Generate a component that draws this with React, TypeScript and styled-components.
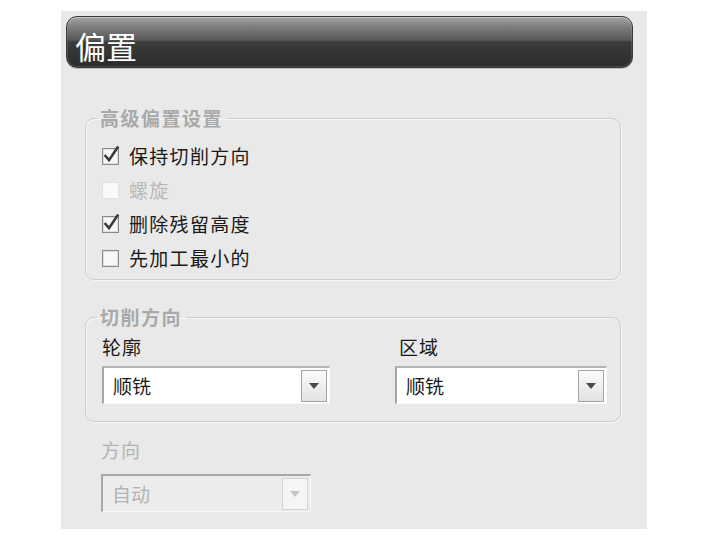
import { createGlobalStyle, styled } from "styled-components";

const GlobalStyle = createGlobalStyle`
  html, body {
    margin: 0;
    padding: 0;
    background: #ffffff;
  }
  * {
    box-sizing: border-box;
  }
`;

const font = `"Noto Sans CJK SC", "Noto Sans", sans-serif`;

const Panel = styled.div`
  margin: 11px 0 0 61px;
  width: 586px;
  height: 518px;
  background: #e9e9e9;
  padding: 5px 14px 0 5px;
  font-family: ${font};
`;

const TitleBar = styled.div`
  height: 52px;
  border-radius: 11px;
  border: 1px solid #3a3a3a;
  padding: 7px 0 0 8px;
  background: linear-gradient(
    to bottom,
    #a4a4a4 0%,
    #7a7a7a 22%,
    #585858 46%,
    #3c3c3c 50%,
    #323232 78%,
    #2c2c2c 100%
  );
  box-shadow: inset 0 1px 0 rgba(255, 255, 255, 0.35),
    inset 0 0 0 1px rgba(255, 255, 255, 0.12), 0 1px 0 #bdbdbd;
  color: #ffffff;
  font-size: 31px;
  line-height: 44px;
`;

const Content = styled.div`
  margin: 0 12px 0 19px;
  display: flex;
  flex-direction: column;
`;

const Group = styled.fieldset<{ $top: number }>`
  margin: ${({ $top }) => $top}px 0 0 0;
  padding: 0;
  border: 1px solid #cdcdcd;
  border-radius: 9px;
  box-shadow: inset 1px 1px 0 #f6f6f6, 1px 1px 0 #f6f6f6;
  min-width: 0;
`;

const GroupTitle = styled.legend`
  margin-left: 11px;
  padding: 0 4px 0 3px;
  font-size: 19px;
  line-height: 22px;
  font-weight: 700;
  letter-spacing: 1.5px;
  color: #a9a9a9;
`;

const OptionList = styled.div`
  padding: 9px 16px 5px 16px;
  display: flex;
  flex-direction: column;
`;

const OptionRow = styled.label<{ $disabled?: boolean }>`
  height: 34px;
  display: flex;
  align-items: center;
  gap: 9px;
  font-size: 19px;
  letter-spacing: 1.3px;
  color: ${({ $disabled }) => ($disabled ? "#b9b9b9" : "#1a1a1a")};
`;

const Columns = styled.div`
  padding: 8px 13px 17px 16px;
  display: grid;
  grid-template-columns: 228px 212px;
  column-gap: 65px;
`;

const Field = styled.div`
  display: flex;
  flex-direction: column;
`;

const FieldLabel = styled.div<{ $disabled?: boolean; $indent?: number }>`
  font-size: 19px;
  line-height: 22px;
  letter-spacing: 1px;
  padding-left: ${({ $indent }) => $indent ?? 0}px;
  color: ${({ $disabled }) => ($disabled ? "#b3b3b3" : "#1a1a1a")};
`;

const Select = styled.div<{ $width: number; $disabled?: boolean; $gap?: number }>`
  width: ${({ $width }) => $width}px;
  height: 38px;
  margin-top: ${({ $gap }) => $gap ?? 8}px;
  display: flex;
  align-items: center;
  justify-content: space-between;
  padding: 0 2px 0 9px;
  background: ${({ $disabled }) => ($disabled ? "#ececec" : "#ffffff")};
  border-style: solid;
  border-width: 2px 1px 1px 2px;
  border-color: ${({ $disabled }) =>
    $disabled ? "#a8a8a8 #f6f6f6 #f6f6f6 #a8a8a8" : "#b4b4b4 #f8f8f8 #f8f8f8 #a6a6a6"};
  font-size: 19px;
  color: ${({ $disabled }) => ($disabled ? "#b3b3b3" : "#1a1a1a")};
`;

const DropButton = styled.div<{ $disabled?: boolean }>`
  width: 26px;
  height: 32px;
  display: flex;
  align-items: center;
  justify-content: center;
  border: 1px solid ${({ $disabled }) => ($disabled ? "#d4d4d4" : "#a4a4a4")};
  background: ${({ $disabled }) =>
    $disabled
      ? "#f5f5f5"
      : "linear-gradient(to bottom, #fbfbfb 0%, #ececec 60%, #e2e2e2 100%)"};
`;

const Standalone = styled.div`
  margin-top: 17px;
  padding-left: 16px;
  display: flex;
  flex-direction: column;
`;

function CheckBox({ checked, disabled }: { checked?: boolean; disabled?: boolean }) {
  return (
    <svg width="18" height="19" viewBox="0 0 18 19">
      <rect
        x="0.5"
        y="2.5"
        width="16"
        height="16"
        fill={disabled ? "#fafafa" : "#f7f7f7"}
        stroke={disabled ? "#e2e2e2" : "#8a8a8a"}
      />
      {!disabled && (
        <rect x="1.5" y="3.5" width="14" height="14" fill="none" stroke="#dedede" />
      )}
      {checked && (
        <path
          d="M3.5 10 L7 14.2 L15.5 1.5"
          fill="none"
          stroke="#3a3a3a"
          strokeWidth="2.6"
          strokeLinecap="square"
        />
      )}
    </svg>
  );
}

function Arrow({ disabled }: { disabled?: boolean }) {
  return (
    <svg width="10" height="6" viewBox="0 0 10 6">
      <path d="M0 0 H10 L5 6 Z" fill={disabled ? "#c4c4c4" : "#4a4a4a"} />
    </svg>
  );
}

const options = [
  { label: "保持切削方向", checked: true },
  { label: "螺旋", disabled: true },
  { label: "删除残留高度", checked: true },
  { label: "先加工最小的" },
];

export default function App() {
  return (
    <>
      <GlobalStyle />
      <Panel>
        <TitleBar>偏置</TitleBar>
        <Content>
          <Group $top={39}>
            <GroupTitle>高级偏置设置</GroupTitle>
            <OptionList>
              {options.map((o) => (
                <OptionRow key={o.label} $disabled={o.disabled}>
                  <CheckBox checked={o.checked} disabled={o.disabled} />
                  {o.label}
                </OptionRow>
              ))}
            </OptionList>
          </Group>

          <Group $top={26}>
            <GroupTitle>切削方向</GroupTitle>
            <Columns>
              <Field>
                <FieldLabel>轮廓</FieldLabel>
                <Select $width={228}>
                  顺铣
                  <DropButton>
                    <Arrow />
                  </DropButton>
                </Select>
              </Field>
              <Field>
                <FieldLabel $indent={4}>区域</FieldLabel>
                <Select $width={212}>
                  顺铣
                  <DropButton>
                    <Arrow />
                  </DropButton>
                </Select>
              </Field>
            </Columns>
          </Group>

          <Standalone>
            <FieldLabel $disabled>方向</FieldLabel>
            <Select $width={210} $disabled $gap={13}>
              自动
              <DropButton $disabled>
                <Arrow disabled />
              </DropButton>
            </Select>
          </Standalone>
        </Content>
      </Panel>
    </>
  );
}
